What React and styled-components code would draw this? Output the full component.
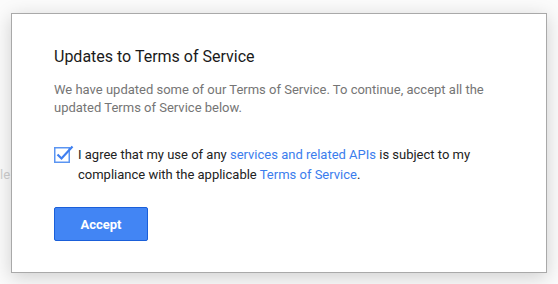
import React from 'react';
import styled, { createGlobalStyle } from 'styled-components';

const Global = createGlobalStyle`
  html, body {
    margin: 0;
    padding: 0;
    background: #fbfbfb;
    font-family: Roboto, 'Liberation Sans', Arial, sans-serif;
    overflow: hidden;
  }
`;

const Page = styled.div`
  position: relative;
  width: 558px;
  height: 284px;
`;

const Behind = styled.div`
  position: absolute;
  left: 0;
  top: 167px;
  font-size: 13px;
  color: #cfcfcf;
  white-space: nowrap;
`;

const Overlay = styled.div`
  position: absolute;
  inset: 0;
  padding: 13px 11px;
  display: flex;
  align-items: flex-start;
`;

const Dialog = styled.div`
  box-sizing: border-box;
  width: 536px;
  height: 260px;
  background: #fff;
  border: 1px solid #a9a9a9;
  box-shadow: 0 4px 18px rgba(0, 0, 0, 0.18);
  padding: 32px 42px 0;
  display: flex;
  flex-direction: column;
  align-items: flex-start;
`;

const Title = styled.h2`
  margin: 0;
  font-size: 16px;
  font-weight: 400;
  color: #1a1a1a;
  line-height: 22px;
`;

const Intro = styled.p`
  margin: 13px 0 0;
  font-size: 13px;
  line-height: 18px;
  color: #757575;
`;

const Agree = styled.label`
  margin-top: 28px;
  display: flex;
  align-items: flex-start;
  gap: 8px;
  font-size: 13px;
  line-height: 20px;
  color: #222;
`;

const Box = styled.span`
  flex: none;
  width: 16px;
  height: 16px;
  margin-top: 2px;
  position: relative;
`;

const Link = styled.a`
  color: #3b7ded;
  text-decoration: none;
`;

const Button = styled.button`
  margin-top: 22px;
  width: 94px;
  height: 34px;
  background: #4285f4;
  border: 1px solid #1a5fd9;
  border-radius: 2px;
  color: #fff;
  font-family: inherit;
  font-size: 13px;
  font-weight: 700;
  cursor: pointer;
`;

const Check = () => (
  <svg width="20" height="20" viewBox="0 0 20 20" style={{ position: 'absolute', left: 0, top: -3 }}>
    <rect x="0.75" y="3.75" width="14.5" height="14.5" fill="none" stroke="#5b95f2" strokeWidth="1.5" />
    <path d="M3.5 10.5 L7.5 14.5 L18.5 2.5" fill="none" stroke="#3f7ff0" strokeWidth="2.2" strokeLinejoin="miter" />
  </svg>
);

export default function App() {
  return (
    <Page>
      <Global />
      <Behind>le</Behind>
      <Overlay>
        <Dialog>
          <Title>Updates to Terms of Service</Title>
          <Intro>
            We have updated some of our Terms of Service. To continue, accept all the
            <br />
            updated Terms of Service below.
          </Intro>
          <Agree>
            <Box>
              <Check />
            </Box>
            <span>
              I agree that my use of any <Link href="#">services and related APIs</Link> is subject to my
              <br />
              compliance with the applicable <Link href="#">Terms of Service</Link>.
            </span>
          </Agree>
          <Button>Accept</Button>
        </Dialog>
      </Overlay>
    </Page>
  );
}
